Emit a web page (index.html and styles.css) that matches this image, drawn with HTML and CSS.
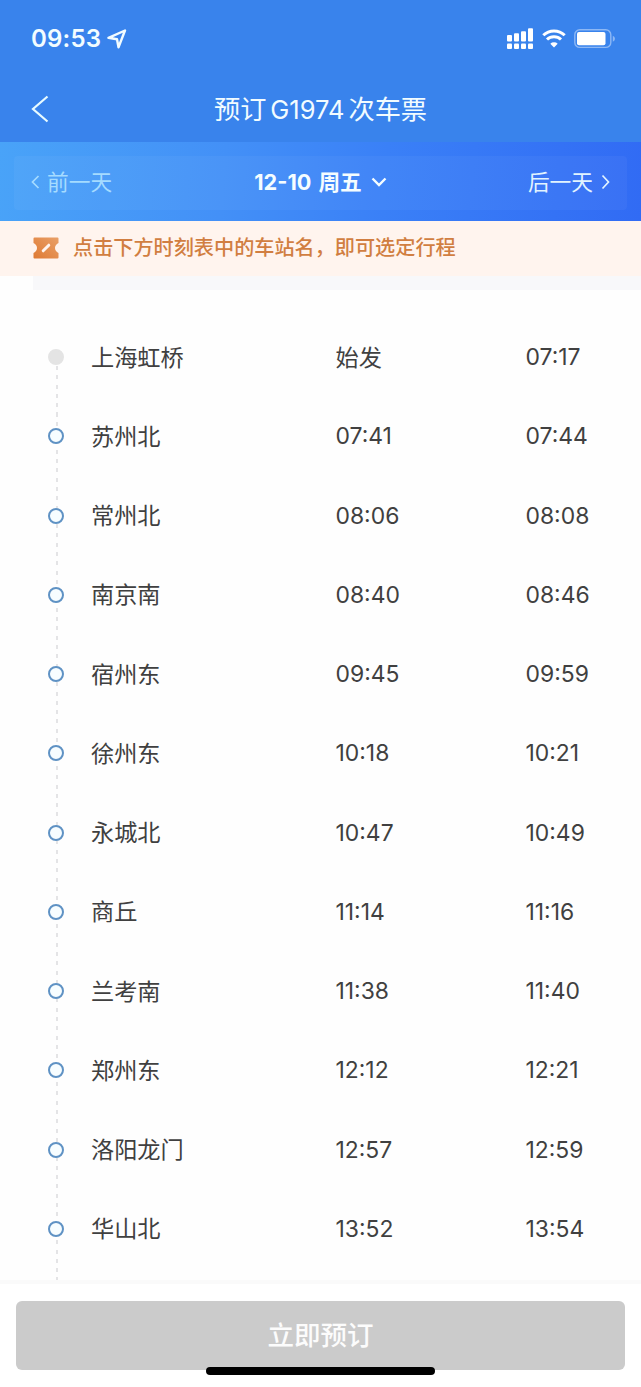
FILE: index.html
```html
<!DOCTYPE html>
<html lang="zh-CN">
  <head>
    <meta charset="UTF-8" />
    <meta name="viewport" content="width=device-width, initial-scale=1.0" />
    <title>预订G1974次车票</title>
    <link rel="stylesheet" href="styles.css">
  </head>
  <body>
    <header class="header">
      <div class="status-bar">
        <span class="clock">09:53</span>
        <svg class="location-icon" width="20" height="20" viewBox="0 0 20 20">
          <path d="M1.5 8.8 18 1.5 11.5 18.3 10 10.2Z" />
        </svg>
        <div class="status-icons">
          <svg class="signal-icon" width="27" height="22" viewBox="0 0 27 22">
            <rect x="0" y="7" width="5" height="6.5" rx="1" />
            <rect x="7" y="5.2" width="5" height="8.3" rx="1" />
            <rect x="14" y="3.2" width="5" height="10.3" rx="1" />
            <rect x="21" y="0.3" width="5" height="13.2" rx="1" />
            <rect x="0" y="15.5" width="5" height="5.5" rx="1" />
            <rect x="7" y="15.5" width="5" height="5.5" rx="1" />
            <rect x="14" y="15.5" width="5" height="5.5" rx="1" />
            <rect x="21" y="15.5" width="5" height="5.5" rx="1" />
          </svg>
          <svg class="wifi-icon" width="24" height="19" viewBox="0 0 24 19">
            <path d="M1.3 6.3a15.3 15.3 0 0 1 21.4 0M5 10.5a10 10 0 0 1 14 0" />
            <path class="wifi-dot" d="M12 18.5 8.3 14.8a5.4 5.4 0 0 1 7.4 0Z" />
          </svg>
          <svg class="battery-icon" width="42" height="20" viewBox="0 0 42 20">
            <rect class="battery-shell" x="0.8" y="0.8" width="36" height="17.6" rx="5" />
            <rect x="3" y="3" width="28.5" height="13.3" rx="2" fill="#fff" />
            <path class="battery-cap" d="M38.8 6.8q2.2 1 2.2 3t-2.2 3Z" />
          </svg>
        </div>
      </div>
      <nav class="nav-bar">
        <svg class="back-icon" width="18" height="28" viewBox="0 0 18 28">
          <path d="M16.5 1.5 2 14 16.5 26.5" />
        </svg>
        <h1>预订<span class="train-no">G1974</span>次车票</h1>
      </nav>
    </header>

    <div class="date-bar">
      <div class="date-panel">
        <div class="day prev-day">
          <svg width="9" height="14" viewBox="0 0 9 14"><path d="M7.5 1 1.5 7l6 6" /></svg>
          <span>前一天</span>
        </div>
        <div class="current-day">
          <span class="current-date">12-10</span>
          <span>周五</span>
          <svg width="16" height="10" viewBox="0 0 16 10"><path d="M1.5 1.5 8 8l6.5-6.5" /></svg>
        </div>
        <div class="day next-day">
          <span>后一天</span>
          <svg width="9" height="16" viewBox="0 0 9 16"><path d="m1.5 1.5 6 6.5-6 6.5" /></svg>
        </div>
      </div>
    </div>

    <div class="notice">
      <svg width="26" height="22" viewBox="0 0 26 22">
        <defs>
          <linearGradient id="ticket" x1="0" y1="1" x2="1" y2="0">
            <stop offset="0" stop-color="#df7a33" />
            <stop offset="1" stop-color="#e9a068" />
          </linearGradient>
        </defs>
        <path fill="url(#ticket)" d="M1.5.5h23q1 0 1 1V6Q22 8 22 11t3.5 5v4.5q0 1-1 1h-23q-1 0-1-1V16Q4 14 4 11T.5 6V1.5q0-1 1-1Z" />
        <path d="m10.2 13.8 5.600-5.600" stroke="#fff4ee" stroke-width="3" stroke-linecap="round" />
      </svg>
      <span>点击下方时刻表中的车站名，即可选定行程</span>
    </div>
    <div class="table-head"></div>

    <main class="timetable">
      <ul class="stations">
        <li class="station start"><i class="dot"></i><span class="name">上海虹桥</span><span class="name">始发</span><span class="time">07:17</span></li>
        <li class="station"><i class="dot"></i><span class="name">苏州北</span><span class="time">07:41</span><span class="time">07:44</span></li>
        <li class="station"><i class="dot"></i><span class="name">常州北</span><span class="time">08:06</span><span class="time">08:08</span></li>
        <li class="station"><i class="dot"></i><span class="name">南京南</span><span class="time">08:40</span><span class="time">08:46</span></li>
        <li class="station"><i class="dot"></i><span class="name">宿州东</span><span class="time">09:45</span><span class="time">09:59</span></li>
        <li class="station"><i class="dot"></i><span class="name">徐州东</span><span class="time">10:18</span><span class="time">10:21</span></li>
        <li class="station"><i class="dot"></i><span class="name">永城北</span><span class="time">10:47</span><span class="time">10:49</span></li>
        <li class="station"><i class="dot"></i><span class="name">商丘</span><span class="time">11:14</span><span class="time">11:16</span></li>
        <li class="station"><i class="dot"></i><span class="name">兰考南</span><span class="time">11:38</span><span class="time">11:40</span></li>
        <li class="station"><i class="dot"></i><span class="name">郑州东</span><span class="time">12:12</span><span class="time">12:21</span></li>
        <li class="station"><i class="dot"></i><span class="name">洛阳龙门</span><span class="time">12:57</span><span class="time">12:59</span></li>
        <li class="station"><i class="dot"></i><span class="name">华山北</span><span class="time">13:52</span><span class="time">13:54</span></li>
      </ul>
    </main>

    <footer class="footer">
      <button class="book-button">立即预订</button>
      <div class="home-indicator"></div>
    </footer>
  </body>
</html>
```

FILE: styles.css
```css
* {
  box-sizing: border-box;
}
body {
  display: flex;
  flex-direction: column;
  height: 1387px;
  margin: 0;
  overflow: hidden;
  background: #fefefe;
  color: #404040;
  font-family: Inter, "Noto Sans CJK SC", sans-serif;
}
svg {
  flex: none;
  fill: none;
}
.header {
  height: 142px;
  background: #3983ec;
  color: #f2fcff;
}
.status-bar {
  display: flex;
  align-items: center;
  height: 77px;
  padding: 0 25px 0 31px;
}
.clock {
  width: 70px;
  font-size: 24px;
  font-weight: 600;
  letter-spacing: 0.2px;
  white-space: nowrap;
}
.location-icon {
  margin-left: 6px;
  stroke: #f2fcff;
  stroke-width: 2.4;
  stroke-linejoin: round;
}
.status-icons {
  display: flex;
  align-items: center;
  margin-left: auto;
}
.signal-icon {
  fill: #fff;
}
.wifi-icon {
  margin: 0 8px;
  stroke: #fff;
  stroke-width: 3;
}
.wifi-dot {
  fill: #fff;
  stroke: none;
}
.battery-shell {
  stroke: #8db8f5;
  stroke-width: 1.4;
}
.battery-cap {
  fill: #8db8f5;
}
.nav-bar {
  display: flex;
  align-items: center;
  height: 64px;
  padding: 0 31px;
}
.nav-bar h1 {
  flex: 1;
  margin: 0 18px 2px 0;
  font-size: 26.2px;
  font-weight: 400;
  text-align: center;
}
.train-no {
  margin: 0 4px;
  font-size: 25.5px;
}
.back-icon {
  stroke: #e8fbff;
  stroke-width: 2.2;
}

.date-bar {
  height: 79px;
  padding: 14px 14px 11px;
  background: linear-gradient(95deg, #49a3f8 0%, #4390f7 35%, #3a80f7 60%, #316bf4 100%);
  color: #e2f4ff;
}
.date-panel {
  display: grid;
  grid-template-columns: 1fr auto 1fr;
  align-items: center;
  height: 54px;
  padding: 0 17px 3px;
  border-radius: 4px;
  background: rgba(255, 255, 255, 0.04);
}
.day,
.current-day {
  display: flex;
  align-items: center;
  font-size: 21.7px;
}
.day svg {
  stroke: currentColor;
  stroke-width: 1.7;
}
.day span,
.current-day span {
  margin-bottom: 2px;
}
.prev-day {
  gap: 7px;
  color: #a5dbff;
}
.next-day {
  justify-content: flex-end;
  gap: 8px;
}
.current-day {
  gap: 7px;
  color: #f5fdff;
  font-weight: 700;
}
.current-day .current-date {
  margin-bottom: 0;
}
.current-day svg {
  margin-left: 2px;
  stroke: #f5fdff;
  stroke-width: 2.4;
}

.notice {
  display: flex;
  align-items: center;
  gap: 14px;
  height: 55px;
  padding: 0 0 2px 33px;
  background: #fff4ee;
  color: #d17e41;
  font-size: 20.15px;
  font-weight: 500;
}
.notice span {
  margin-bottom: 2px;
}
.table-head {
  height: 14px;
  margin-left: 33px;
  background: #f8f8fa;
}

.timetable {
  flex: 1;
  padding-top: 27.4px;
  overflow: hidden;
}
.stations {
  height: 100%;
  margin: 0;
  padding: 0;
  list-style: none;
  background: repeating-linear-gradient(#e4e4e6 0 4px, transparent 4px 9.3px) 56px 49px / 2px 100% no-repeat;
}
.station {
  display: grid;
  grid-template-columns: 43px 244.5px 190px 1fr;
  align-items: center;
  height: 79.25px;
  padding-left: 48px;
}
.name {
  margin-bottom: 3px;
  font-size: 23.2px;
}
.time {
  font-size: 22.9px;
}
.dot {
  width: 16px;
  height: 16px;
  border: 2px solid #5f92c4;
  border-radius: 50%;
  background: #f7fdff;
}
.start .dot {
  border-color: #e4e4e4;
  background: #e4e4e4;
}

.footer {
  height: 107px;
  padding: 17px 16px 0;
  border-top: 4px solid #fafafa;
  background: #fff;
}
.book-button {
  display: block;
  width: 100%;
  height: 69px;
  padding: 0 0 4px;
  border: none;
  border-radius: 6px;
  background: #cbcbcb;
  color: #fcfcfc;
  font: inherit;
  font-size: 26.5px;
  font-weight: 500;
}
.home-indicator {
  position: absolute;
  top: 1367px;
  left: 206px;
  width: 229px;
  height: 8px;
  border-radius: 4px;
  background: #000;
}
```
